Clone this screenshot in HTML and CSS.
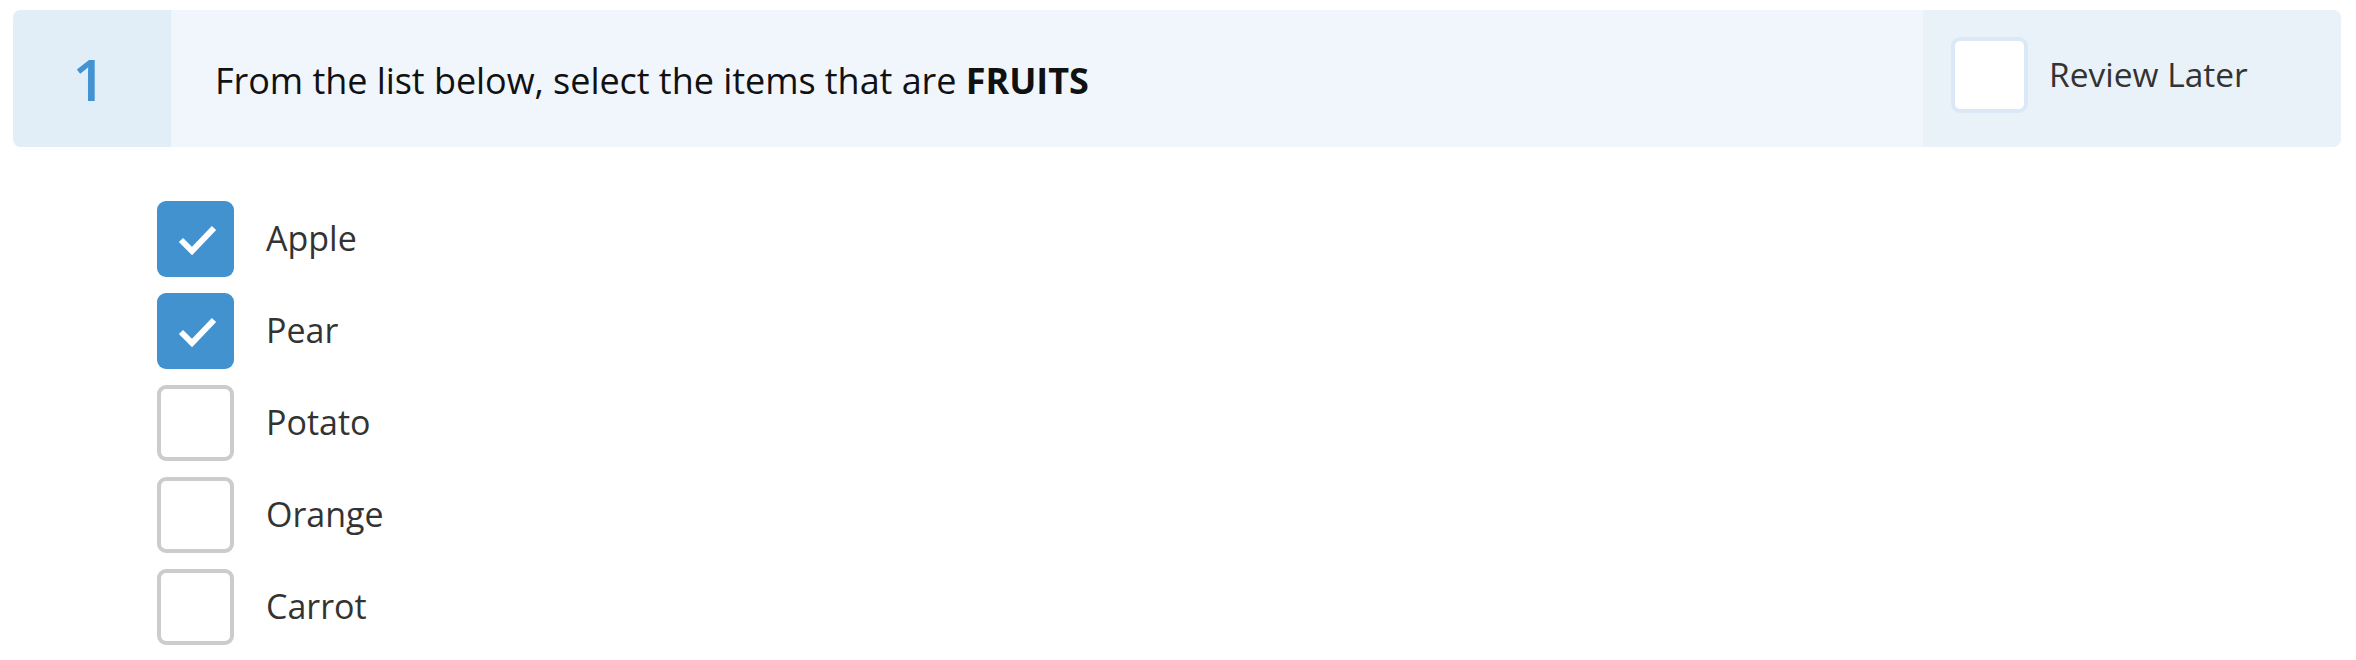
FILE: index.html
```html
<!DOCTYPE html>
<html>
<head>
<meta charset="utf-8">
<link rel="stylesheet" href="styles.css">
</head>
<body>
<div class="page">
  <div class="question">
    <div class="qnum">1</div>
    <div class="qtext">From the list below, select the items that are&nbsp;<strong>FRUITS</strong></div>
    <div class="review">
      <span class="review-box"></span>
      <span class="review-label">Review Later</span>
    </div>
  </div>
  <ul class="options">
    <li class="option">
      <span class="box checked"><svg viewBox="0 0 77 76" width="77" height="76"><polyline points="24,39 35,50 57,27" fill="none" stroke="#fff" stroke-width="6"/></svg></span>
      <span class="label">Apple</span>
    </li>
    <li class="option">
      <span class="box checked"><svg viewBox="0 0 77 76" width="77" height="76"><polyline points="24,39 35,50 57,27" fill="none" stroke="#fff" stroke-width="6"/></svg></span>
      <span class="label">Pear</span>
    </li>
    <li class="option">
      <span class="box"></span>
      <span class="label">Potato</span>
    </li>
    <li class="option">
      <span class="box"></span>
      <span class="label">Orange</span>
    </li>
    <li class="option">
      <span class="box"></span>
      <span class="label">Carrot</span>
    </li>
  </ul>
</div>
</body>
</html>
```

FILE: styles.css
```css
html, body {
  margin: 0;
  padding: 0;
  background: #ffffff;
}
body {
  font-family: "Open Sans", "Noto Sans", sans-serif;
}
.page {
  padding: 10px 15px 0 13px;
}
.question {
  display: flex;
  height: 137px;
  border-radius: 8px;
  overflow: hidden;
  background: #f0f6fb;
}
.qnum {
  width: 158px;
  flex: none;
  background: #e1eef8;
  color: #4392d1;
  font-size: 58px;
  font-weight: 600;
  display: flex;
  align-items: center;
  justify-content: center;
  padding-right: 6px;
  box-sizing: border-box;
}
.qtext {
  flex: 1;
  display: flex;
  align-items: center;
  padding-left: 44px;
  padding-top: 3px;
  font-size: 36px;
  letter-spacing: -0.05px;
  color: #111111;
}
.qtext strong {
  font-weight: 700;
}
.review {
  width: 418px;
  flex: none;
  background: #e9f2f9;
  display: flex;
  align-items: flex-start;
  padding: 27px 0 0 28px;
  box-sizing: border-box;
}
.review-box {
  width: 77px;
  height: 76px;
  box-sizing: border-box;
  border: 4px solid #dbe9f6;
  border-radius: 9px;
  background: #ffffff;
  flex: none;
}
.review-label {
  margin-left: 21px;
  font-size: 33.5px;
  color: #333333;
  line-height: 76px;
  margin-top: -1px;
}
.options {
  list-style: none;
  margin: 54px 0 0 144px;
  padding: 0;
  display: flex;
  flex-direction: column;
  gap: 16px;
}
.option {
  display: flex;
  align-items: center;
  height: 76px;
}
.box {
  width: 77px;
  height: 76px;
  box-sizing: border-box;
  border: 4px solid #cccccc;
  border-radius: 9px;
  background: #ffffff;
  flex: none;
}
.box.checked {
  border: none;
  background: #4292d0;
}
.box svg {
  display: block;
}
.label {
  margin-left: 32px;
  margin-top: -2px;
  font-size: 34px;
  color: #333333;
}
```
